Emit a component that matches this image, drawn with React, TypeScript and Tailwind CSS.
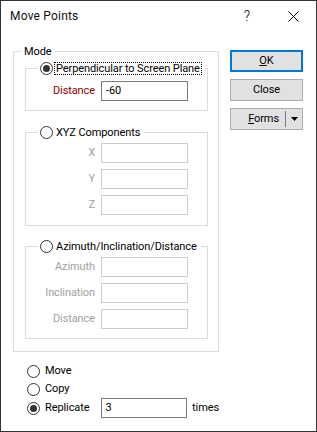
import React from "react";

function Radio({ checked }: { checked?: boolean }) {
  return (
    <span className="w-[13px] h-[13px] rounded-full border border-[#333333] bg-white flex items-center justify-center shrink-0">
      {checked && <span className="w-[7px] h-[7px] rounded-full bg-[#333333]" />}
    </span>
  );
}

function Field({
  label,
  value,
  enabled,
  labelColor,
  className,
}: {
  label: string;
  value?: string;
  enabled?: boolean;
  labelColor?: string;
  className?: string;
}) {
  return (
    <div className={"flex items-center h-[20px] " + (className ?? "")}>
      <span className={"w-[69px] text-right whitespace-nowrap " + (labelColor ?? (enabled ? "text-black" : "text-[#a0a0a0]"))}>
        {label}
      </span>
      <div
        className={
          "ml-[6px] w-[87px] h-[20px] bg-white flex items-center pl-[4px] border " +
          (enabled ? "border-[#7a7a7a]" : "border-[#cccccc]")
        }
      >
        {value}
      </div>
    </div>
  );
}

function GroupLegend({ label, checked, focused }: { label: string; checked?: boolean; focused?: boolean }) {
  return (
    <legend className="ml-[12px] px-[2px] h-[15px]">
      <div className="flex items-center h-[15px] whitespace-nowrap">
        <Radio checked={checked} />
        <span
          className={
            "ml-[1px] h-[13px] flex items-center px-[1px] leading-none border " +
            (focused ? "border-dotted border-black" : "border-transparent")
          }
        >
          {label}
        </span>
      </div>
    </legend>
  );
}

export default function App() {
  return (
    <div
      className="w-[317px] h-[432px] border border-[#333333] bg-white flex flex-col text-[11px] tracking-[-0.1px] text-black overflow-hidden"
      style={{ fontFamily: 'Roboto, "Noto Sans", sans-serif' }}
    >
      {/* Title bar */}
      <div className="h-[30px] flex items-center shrink-0">
        <span className="pl-[9px] text-[12px] font-normal tracking-[0.2px] text-[#111111]">Move Points</span>
        <div className="ml-auto flex h-full">
          <div className="w-[46px] h-full flex items-center justify-center text-[14px] font-light">?</div>
          <div className="w-[46px] h-full flex items-center justify-center">
            <svg width="11" height="11" viewBox="0 0 11 11">
              <path d="M0.5 0.5 L10.5 10.5 M10.5 0.5 L0.5 10.5" stroke="#000" strokeWidth="1" />
            </svg>
          </div>
        </div>
      </div>

      {/* Body */}
      <div className="flex pl-[12px]">
        {/* Left column */}
        <div className="w-[206px] flex flex-col">
          <fieldset className="w-[206px] min-w-0 border border-[#dcdcdc] mt-[13px] pb-[12px]">
            <legend className="ml-[7px] px-[3px] h-[15px] leading-[15px]">Mode</legend>

            <fieldset className="w-[183px] min-w-0 border border-[#dcdcdc] ml-[11px] mt-[2px] pb-[9px]">
              <GroupLegend label="Perpendicular to Screen Plane" checked focused />
              <Field label="Distance" value="-60" enabled labelColor="text-[#8b0000]" className="mt-[5px]" />
            </fieldset>

            <fieldset className="w-[183px] min-w-0 border border-[#dcdcdc] ml-[11px] mt-[14px] pb-[10px] flex flex-col">
              <GroupLegend label="XYZ Components" />
              <Field label="X" className="mt-[3px]" />
              <Field label="Y" className="mt-[6px]" />
              <Field label="Z" className="mt-[6px]" />
            </fieldset>

            <fieldset className="w-[183px] min-w-0 border border-[#dcdcdc] ml-[11px] mt-[13px] pb-[9px] flex flex-col">
              <GroupLegend label="Azimuth/Inclination/Distance" />
              <Field label="Azimuth" className="mt-[3px]" />
              <Field label="Inclination" className="mt-[6px]" />
              <Field label="Distance" className="mt-[6px]" />
            </fieldset>
          </fieldset>

          {/* Bottom radios */}
          <div className="flex flex-col mt-[10px] pl-[14px]">
            <div className="h-[18px] flex items-center">
              <Radio />
              <span className="ml-[5px]">Move</span>
            </div>
            <div className="h-[18px] flex items-center">
              <Radio />
              <span className="ml-[5px]">Copy</span>
            </div>
            <div className="h-[20px] flex items-center">
              <Radio checked />
              <span className="ml-[5px] w-[56px]">Replicate</span>
              <div className="w-[87px] h-[20px] border border-[#7a7a7a] bg-white flex items-center pl-[4px]">3</div>
              <span className="ml-[5px]">times</span>
            </div>
          </div>
        </div>

        {/* Right column */}
        <div className="ml-[11px] w-[73px] flex flex-col mt-[19px]">
          <div className="h-[22px] border-2 border-[#0078d7] bg-[#e1e1e1] flex items-center justify-center">
            <span>
              <span className="underline">O</span>K
            </span>
          </div>
          <div className="mt-[7px] h-[22px] border border-[#adadad] bg-[#e1e1e1] flex items-center justify-center">
            Close
          </div>
          <div className="mt-[7px] h-[22px] border border-[#adadad] bg-[#e1e1e1] flex items-center">
            <span className="flex-1 text-right pr-[6px]">
              <span className="underline">F</span>orms
            </span>
            <span className="w-px h-[16px] bg-[#7a7a7a]" />
            <span className="w-[16px] flex items-center justify-center">
              <svg width="7" height="4" viewBox="0 0 7 4">
                <path d="M0 0 H7 L3.5 4 Z" fill="#000" />
              </svg>
            </span>
          </div>
        </div>
      </div>
    </div>
  );
}
